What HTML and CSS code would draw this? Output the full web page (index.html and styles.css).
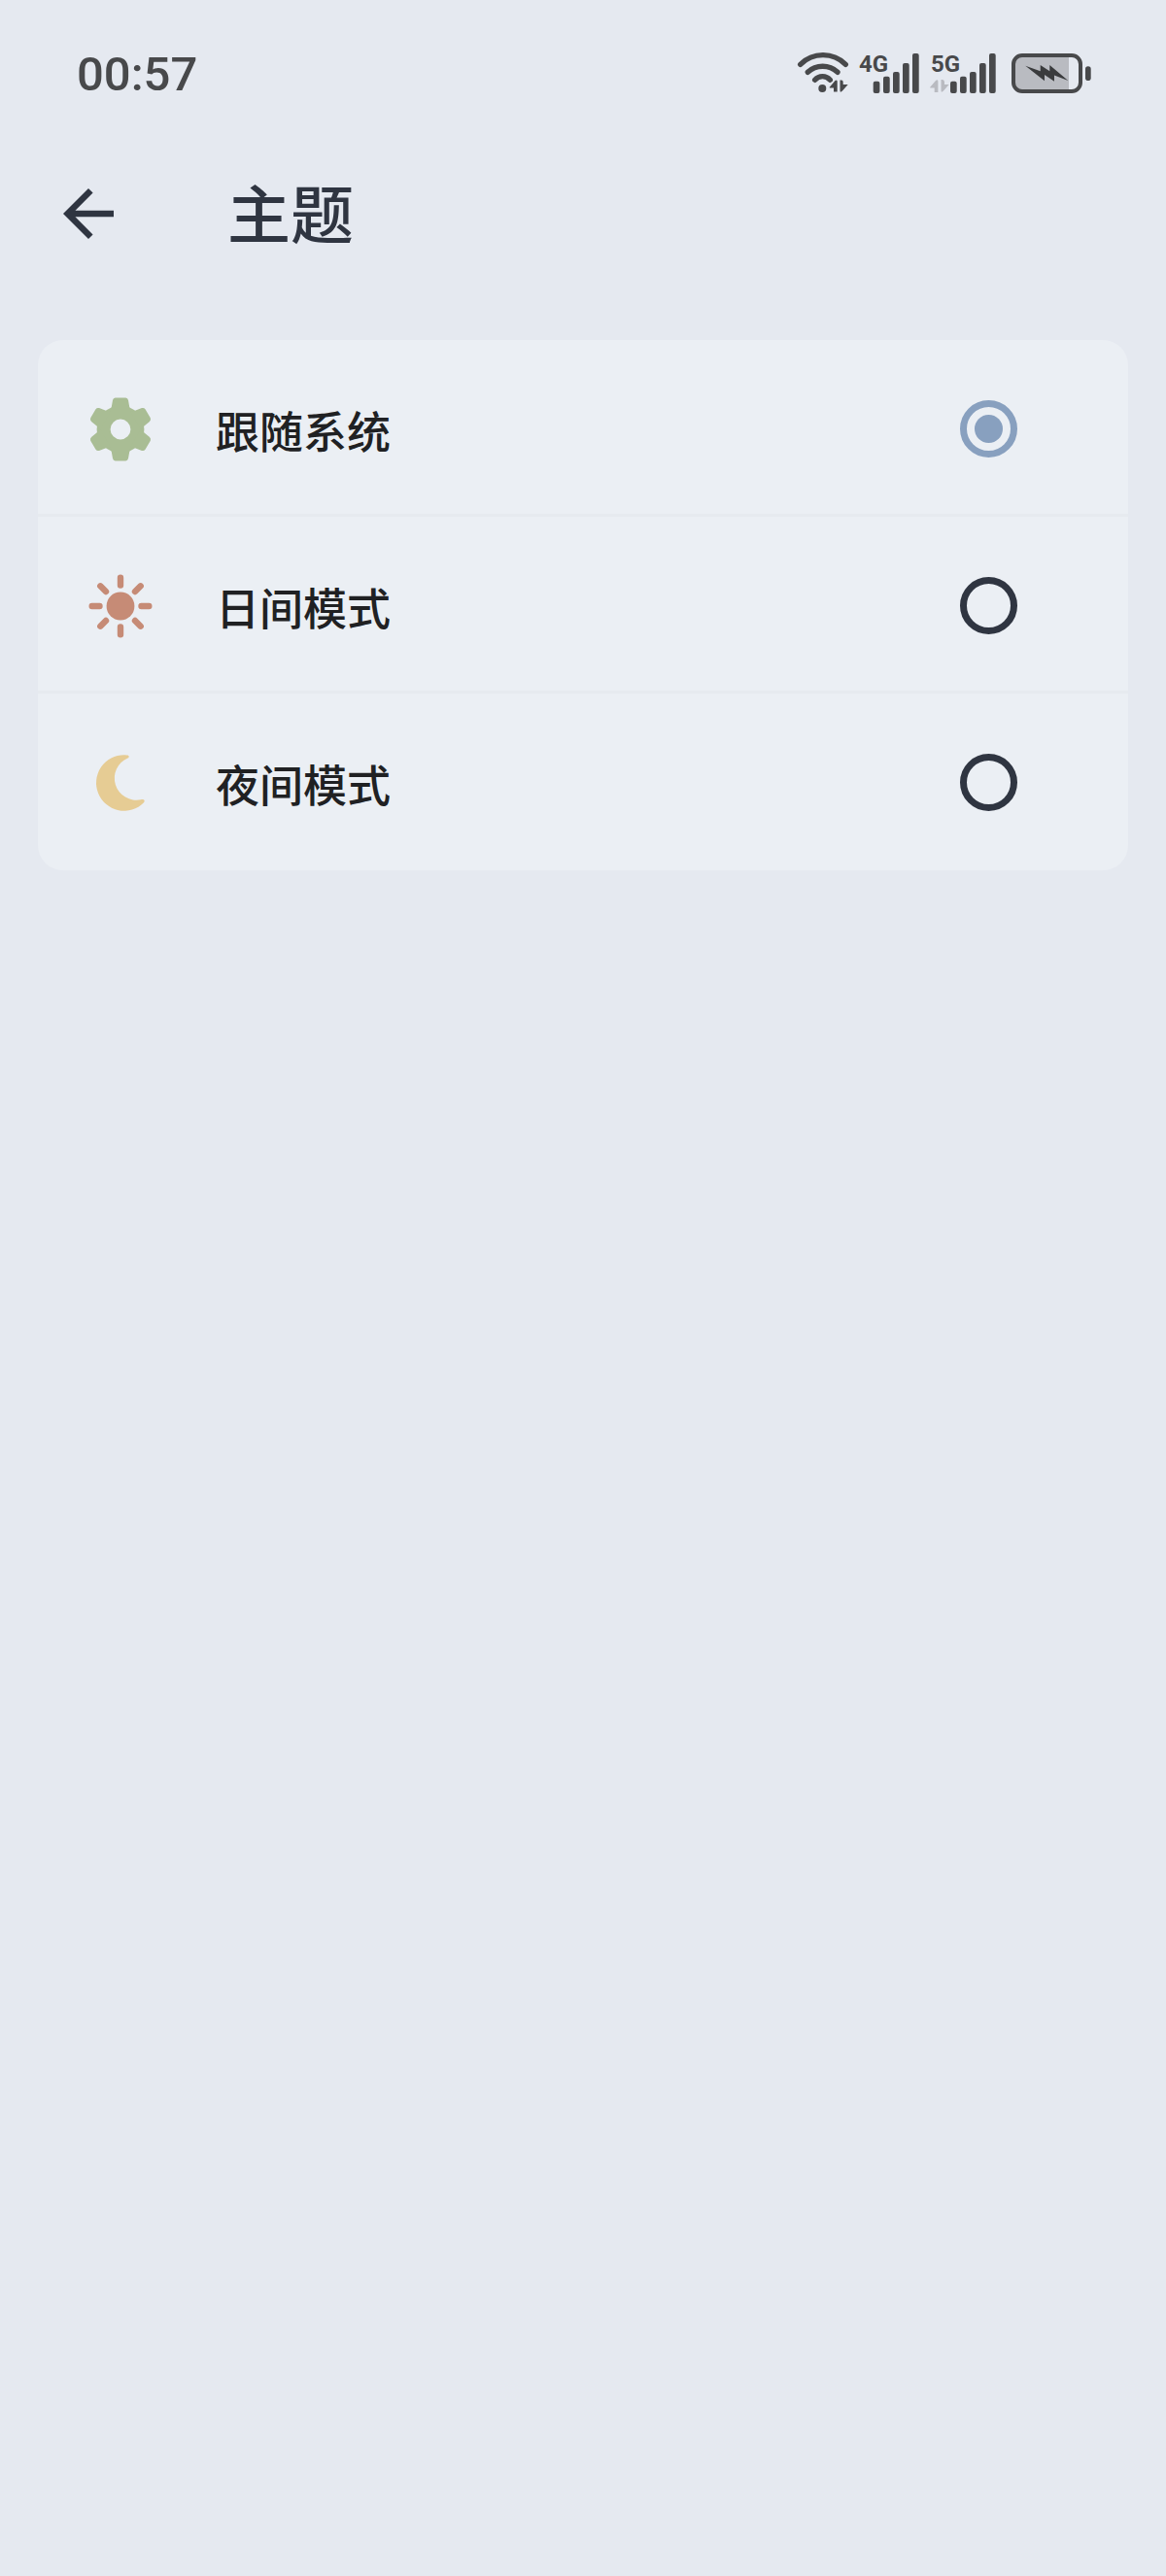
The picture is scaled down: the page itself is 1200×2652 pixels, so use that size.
FILE: index.html
```html
<!DOCTYPE html>
<html lang="zh-CN">
<head>
  <meta charset="UTF-8">
  <meta name="viewport" content="width=device-width, initial-scale=1.0">
  <title>主题</title>
  <link rel="stylesheet" href="styles.css">
</head>
<body>

  <div class="status-bar">
    <span class="time">00:57</span>
    <div class="status-icons">
      <svg width="53" height="44" viewBox="0 0 53 44">
        <g class="wifi-arcs">
          <path d="M2.7 12.3A32.8 32.8 0 0 1 49.3 12.3"/>
          <path d="M10.3 20.3A22.5 22.5 0 0 1 41 20.3"/>
          <path d="M17.7 28.3A10.2 10.2 0 0 1 33.3 28.3"/>
        </g>
        <circle cx="25.3" cy="37" r="4"/>
        <path d="M32.5 36L38.5 29Q40.7 27.5 40.7 30V40.5H37V36.5H33zM43.5 28.5H45Q46.7 28.5 46.7 30.5V33H51.7L46 39.5Q43.5 42 43.5 39z"/>
      </svg>
      <svg width="63" height="44" viewBox="0 0 63 44">
        <text class="net" x="0" y="20">4G</text>
        <rect x="14.7" y="29.7" width="6.7" height="12.3" rx="2"/>
        <rect x="25" y="24.7" width="6.7" height="17.3" rx="2"/>
        <rect x="35" y="20" width="6.7" height="22" rx="2"/>
        <rect x="45" y="11" width="6.7" height="31" rx="2"/>
        <rect x="55" y="1" width="6.7" height="41" rx="2"/>
      </svg>
      <svg width="74" height="44" viewBox="0 0 74 44">
        <text class="net" x="1" y="20">5G</text>
        <path class="muted" d="M0 36L6 29Q8.4 27 8.4 30V41H4.7V36.5H.5zM11.5 28H13Q15 28 15 30.5V33H19.7L14 39.5Q11.5 42 11.5 39z"/>
        <rect x="21" y="29.7" width="6.7" height="12.3" rx="2"/>
        <rect x="31" y="24.7" width="6.7" height="17.3" rx="2"/>
        <rect x="41" y="20" width="6.7" height="22" rx="2"/>
        <rect x="51" y="11" width="6.7" height="31" rx="2"/>
        <rect x="61" y="1" width="6.7" height="41" rx="2"/>
      </svg>
      <svg width="82" height="44" viewBox="0 0 82 44">
        <path class="muted" d="M12 3H59V40H12Q2 40 2 31V12Q2 3 12 3z"/>
        <rect class="battery-case" x="2" y="3" width="69" height="37" rx="9"/>
        <rect x="76" y="14.3" width="5.7" height="14.7" rx="2.8"/>
        <path class="bolt" d="M14.3 13.7L29.7 19.3V13L39.3 19.3V13L58.3 29L44 23.6V29.7L34 23V29.3z"/>
      </svg>
    </div>
  </div>

  <header class="header">
    <a class="back" href="#" aria-label="返回">
      <svg width="78" height="78" viewBox="0 0 24 24">
        <path d="M20 11H7.83l5.59-5.59L12 4l-8 8 8 8 1.41-1.41L7.83 13H20v-2z"/>
      </svg>
    </a>
    <h1>主题</h1>
  </header>

  <main class="card">
    <label class="option" for="system">
      <svg class="gear" width="78" height="78" viewBox="-39 -40 78 78">
        <defs>
          <path id="tooth" d="M-10.5-18L-9.2-23.3L-8-30Q-7.5-32.2-5.3-32.5H5.3Q7.5-32.2 8-30L9.2-23.3L10.5-18z"/>
        </defs>
        <path fill-rule="evenodd" d="M-24.4 0A24.4 24.4 0 0 1 24.4 0A24.4 24.4 0 0 1-24.4 0zM-10.4 0A10.4 10.4 0 0 0 10.4 0A10.4 10.4 0 0 0-10.4 0z"/>
        <use href="#tooth"/>
        <use href="#tooth" transform="rotate(60)"/>
        <use href="#tooth" transform="rotate(120)"/>
        <use href="#tooth" transform="rotate(180)"/>
        <use href="#tooth" transform="rotate(240)"/>
        <use href="#tooth" transform="rotate(300)"/>
      </svg>
      <span class="name">跟随系统</span>
      <input type="radio" name="theme" id="system" checked>
    </label>

    <label class="option" for="light">
      <svg class="sun" width="78" height="78" viewBox="-39 -40 78 78">
        <circle r="14.4"/>
        <path d="M0-29.3V-21.5M0 29.3V21.5M-29.3 0H-21.5M29.3 0H21.5M-20.7-20.7L-15-15M20.7-20.7L15-15M-20.7 20.7L-15 15M20.7 20.7L15 15"/>
      </svg>
      <span class="name">日间模式</span>
      <input type="radio" name="theme" id="light">
    </label>

    <label class="option" for="dark">
      <svg class="moon" width="78" height="78" viewBox="-39 -40 78 78">
        <path d="M4-28.7L7-28.6C9-28.5 9.3-26.5 7.5-25.5A22.5 22.5 0 0 0 21 17.2C24 16.6 25.8 18 24 20.3A28.7 28.7 0 1 1 4-28.7z"/>
      </svg>
      <span class="name">夜间模式</span>
      <input type="radio" name="theme" id="dark">
    </label>
  </main>

</body>
</html>
```
FILE: styles.css
```css
* {
  box-sizing: border-box;
}

body {
  margin: 0;
  min-height: 100vh;
  background-color: #e5e9f0;
  color: #2f3541;
  font-family: Roboto, "Noto Sans CJK SC", sans-serif;
}

svg {
  display: block;
  flex-shrink: 0;
  overflow: visible;
}

.status-bar {
  display: flex;
  align-items: center;
  justify-content: space-between;
  height: 152px;
  padding: 0 77px 0 79px;
  color: #48494b;
}

.time {
  font-size: 49px;
  font-weight: 500;
}

.status-icons {
  display: flex;
  gap: 10px;
  fill: #48494b;
}

.wifi-arcs {
  fill: none;
  stroke: #48494b;
  stroke-width: 5.4;
  stroke-linecap: round;
}

.net {
  font-size: 24px;
  font-weight: bold;
}

.muted {
  fill: #b9bbc1;
}

.battery-case {
  fill: none;
  stroke: #48494b;
  stroke-width: 4;
}

.bolt {
  fill: #3a3b3d;
}

.header {
  display: flex;
  align-items: center;
  gap: 104px;
  height: 136px;
  padding: 0 52px;
}

.back {
  fill: #2f3541;
}

h1 {
  margin: 0;
  padding-top: 6px;
  font-size: 65px;
  font-weight: 500;
  line-height: 80px;
}

.card {
  margin: 62px 39px 0;
  border-radius: 26px;
  background-color: #ebeff4;
  overflow: hidden;
}

.option {
  display: flex;
  align-items: center;
  gap: 59px;
  height: 182px;
  padding: 0 114px 0 46px;
  cursor: pointer;
}

.option:not(:last-child) {
  box-shadow: inset 0 -3px #e6eaef;
}

.gear {
  fill: #a9bd94;
}

.sun {
  fill: #c68b76;
  stroke: #c68b76;
  stroke-width: 6.4;
  stroke-linecap: round;
}

.sun circle {
  stroke: none;
}

.moon {
  fill: #e6cc94;
}

.name {
  flex: 1;
  padding-top: 2px;
  color: #202123;
  font-size: 45px;
  font-weight: 500;
}

.option input {
  appearance: none;
  width: 59px;
  height: 59px;
  margin: 0;
  padding: 8px;
  border: 7px solid #2f3541;
  border-radius: 50%;
  background-clip: content-box;
}

.option input:checked {
  border-color: #88a0bf;
  background-color: #88a0bf;
}
```
